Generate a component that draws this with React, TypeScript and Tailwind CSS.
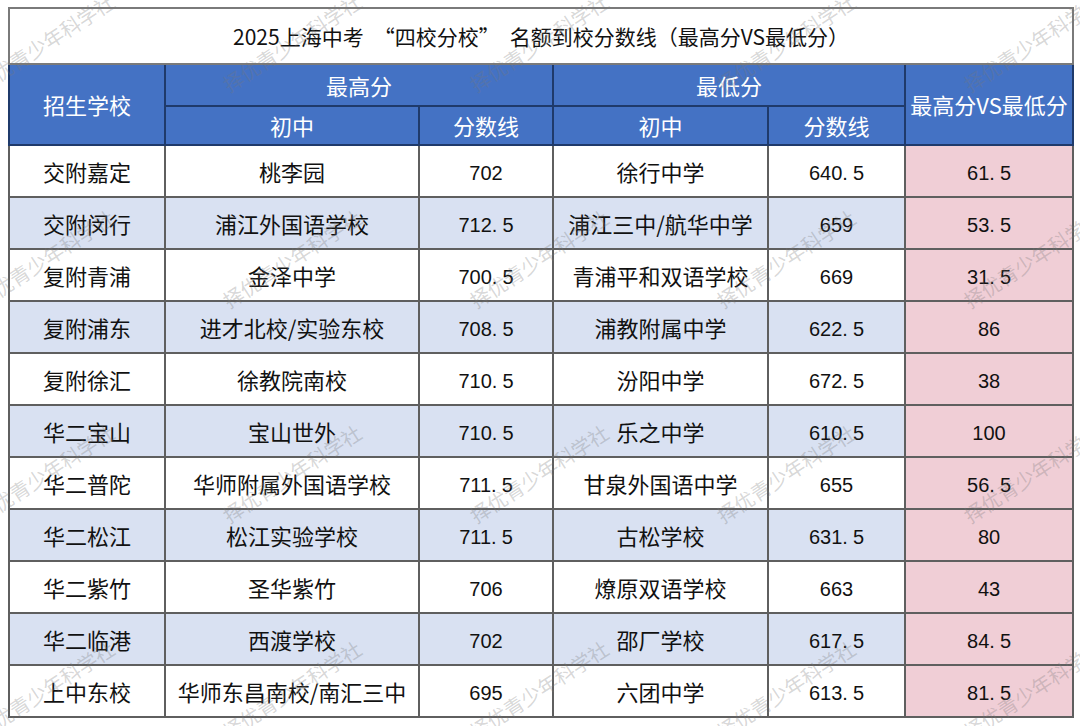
import React from 'react';

const rows = [
    ['交附嘉定', '桃李园', '702', '徐行中学', '640.5', '61.5'],
    ['交附闵行', '浦江外国语学校', '712.5', '浦江三中/航华中学', '659', '53.5'],
    ['复附青浦', '金泽中学', '700.5', '青浦平和双语学校', '669', '31.5'],
    ['复附浦东', '进才北校/实验东校', '708.5', '浦教附属中学', '622.5', '86'],
    ['复附徐汇', '徐教院南校', '710.5', '汾阳中学', '672.5', '38'],
    ['华二宝山', '宝山世外', '710.5', '乐之中学', '610.5', '100'],
    ['华二普陀', '华师附属外国语学校', '711.5', '甘泉外国语中学', '655', '56.5'],
    ['华二松江', '松江实验学校', '711.5', '古松学校', '631.5', '80'],
    ['华二紫竹', '圣华紫竹', '706', '燎原双语学校', '663', '43'],
    ['华二临港', '西渡学校', '702', '邵厂学校', '617.5', '84.5'],
    ['上中东校', '华师东昌南校/南汇三中', '695', '六团中学', '613.5', '81.5'],
];

// watermark grid, centers in px
const marks: { x: number; y: number }[] = [];
[43, 259, 474, 690].forEach((y) => {
    [45, 292, 539, 786, 1033].forEach((x) => marks.push({ x, y }));
});

function Num({ v }: { v: string }) {
    const [a, b] = v.split('.');
    return (
        <span className="font-['Liberation_Sans',sans-serif] text-[20px]">
            {a}
            {b !== undefined && (
                <>
                    <span className="mr-[5px]">.</span>
                    {b}
                </>
            )}
        </span>
    );
}

export default function App() {
    const cjk = "font-['Noto_Sans_CJK_SC','Noto_Sans',sans-serif]";
    const td = 'border-2 border-[#5f5f5f] text-center align-middle p-0';
    const th = 'border-2 border-[#1f3a6b] bg-[#4472c4] text-white font-normal text-center align-middle p-0';

    return (
        <div className={`relative w-[1080px] h-[726px] bg-white overflow-hidden ${cjk} text-[22px] text-[#111]`}>
            <div className="pt-[7px] pl-[8px]">
                <table className="table-fixed border-collapse w-[1064px]">
                    <colgroup>
                        <col className="w-[156px]" />
                        <col className="w-[254px]" />
                        <col className="w-[134px]" />
                        <col className="w-[215px]" />
                        <col className="w-[137px]" />
                        <col className="w-[168px]" />
                    </colgroup>
                    <thead>
                        <tr className="h-[56px]">
                            <th colSpan={6} className="border-2 border-[#7a7a7a] font-normal text-[21px] text-center align-middle pt-[2px]">
                                2025上海中考<span className="ml-[10px]">“</span>四校分校<span className="mr-[10px]">”</span>名额到校分数线（最高分VS最低分）
                            </th>
                        </tr>
                        <tr className="h-[42px]">
                            <th rowSpan={2} className={th}>招生学校</th>
                            <th colSpan={2} className={th}>最高分</th>
                            <th colSpan={2} className={th}>最低分</th>
                            <th rowSpan={2} className={th}>最高分VS最低分</th>
                        </tr>
                        <tr className="h-[39px]">
                            <th className={th}>初中</th>
                            <th className={th}>分数线</th>
                            <th className={th}>初中</th>
                            <th className={th}>分数线</th>
                        </tr>
                    </thead>
                    <tbody>
                        {rows.map((r, i) => {
                            const bg = i % 2 === 1 ? 'bg-[#d9e1f2]' : 'bg-white';
                            return (
                                <tr key={r[0]} className="h-[52px]">
                                    <td className={`${td} ${bg}`}>{r[0]}</td>
                                    <td className={`${td} ${bg}`}>{r[1]}</td>
                                    <td className={`${td} ${bg}`}><Num v={r[2]} /></td>
                                    <td className={`${td} ${bg}`}>{r[3]}</td>
                                    <td className={`${td} ${bg}`}><Num v={r[4]} /></td>
                                    <td className={`${td} bg-[#f0ced6]`}><Num v={r[5]} /></td>
                                </tr>
                            );
                        })}
                    </tbody>
                </table>
            </div>

            {/* watermark layer */}
            <div className="absolute inset-0 pointer-events-none">
                {marks.map((m, i) => (
                    <div
                        key={i}
                        className="absolute w-[170px] text-center text-[20px] leading-none whitespace-nowrap text-[rgba(120,120,120,0.3)] -rotate-[33deg]"
                        style={{ left: m.x - 85, top: m.y - 10 }}
                    >
                        择优青少年科学社
                    </div>
                ))}
            </div>
        </div>
    );
}
